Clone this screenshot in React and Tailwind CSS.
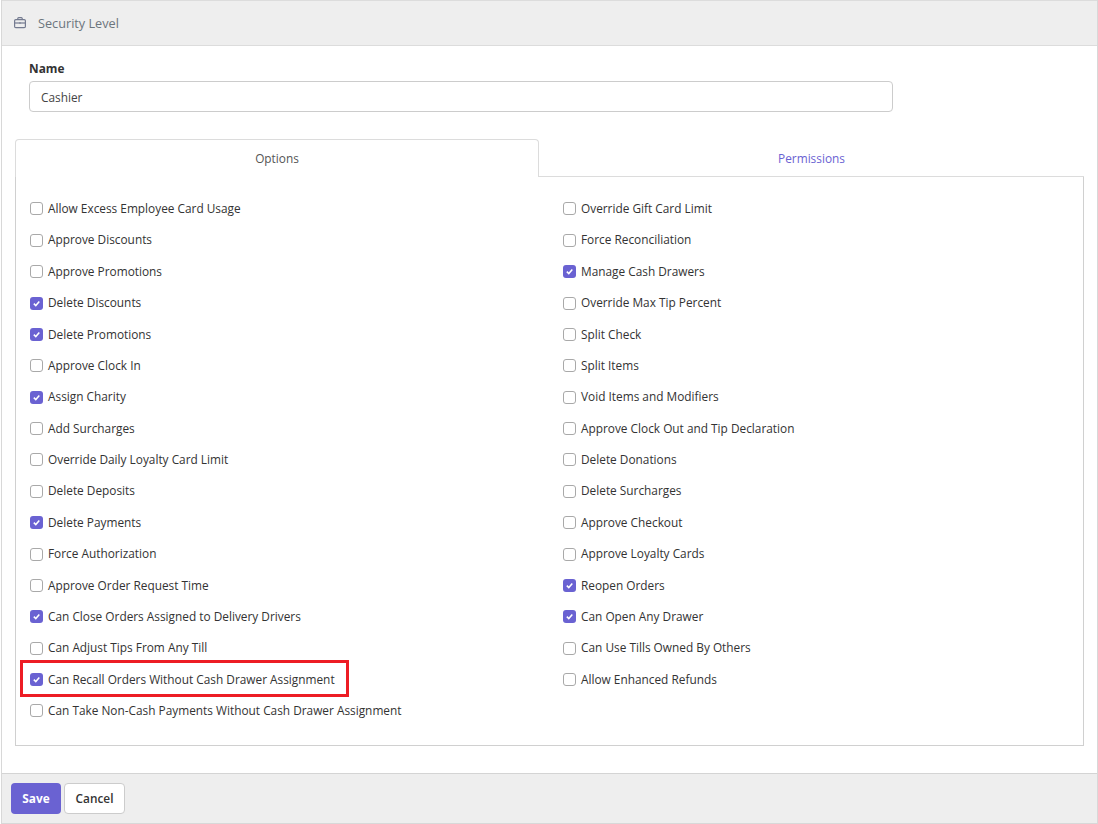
import React from 'react';

const rows = [
  ['Allow Excess Employee Card Usage', false, 'Override Gift Card Limit', false],
  ['Approve Discounts', false, 'Force Reconciliation', false],
  ['Approve Promotions', false, 'Manage Cash Drawers', true],
  ['Delete Discounts', true, 'Override Max Tip Percent', false],
  ['Delete Promotions', true, 'Split Check', false],
  ['Approve Clock In', false, 'Split Items', false],
  ['Assign Charity', true, 'Void Items and Modifiers', false],
  ['Add Surcharges', false, 'Approve Clock Out and Tip Declaration', false],
  ['Override Daily Loyalty Card Limit', false, 'Delete Donations', false],
  ['Delete Deposits', false, 'Delete Surcharges', false],
  ['Delete Payments', true, 'Approve Checkout', false],
  ['Force Authorization', false, 'Approve Loyalty Cards', false],
  ['Approve Order Request Time', false, 'Reopen Orders', true],
  ['Can Close Orders Assigned to Delivery Drivers', true, 'Can Open Any Drawer', true],
  ['Can Adjust Tips From Any Till', false, 'Can Use Tills Owned By Others', false],
  ['Can Recall Orders Without Cash Drawer Assignment', true, 'Allow Enhanced Refunds', false],
  ['Can Take Non-Cash Payments Without Cash Drawer Assignment', false],
];

const Option = ({ label, checked, highlight }) => (
  <label className="relative flex h-[31.375px] items-center pl-[14px] text-[#333]">
    {checked ? (
      <span className="flex h-[13px] w-[13px] items-center justify-center rounded-[3px] bg-[#6a62d2]">
        <svg viewBox="0 0 13 13" className="h-[13px] w-[13px]" fill="none" stroke="white" strokeWidth="1.5">
          <path d="M3.8 6.6l2 2 3.5-4" />
        </svg>
      </span>
    ) : (
      <span className="h-[13px] w-[13px] rounded-[3px] border border-[#a9a9a9] bg-white" />
    )}
    <span className="ml-[5px]">{label}</span>
    {highlight && (
      <span className="absolute left-[4px] top-[-4px] h-[37px] w-[329px] border-[3px] border-[#ed1c24]" />
    )}
  </label>
);

export default function App() {
  return (
    <div className="ml-px flex h-[824px] flex-col border-x border-b border-[#d8d8d8] bg-white font-['Open_Sans',sans-serif] text-[11.85px] text-[#333]">
      {/* Header */}
      <div className="flex h-[46px] items-center border-y border-[#dcdcdc] bg-[#eeeeee] pl-[11px] text-[#6c757d]">
        <svg viewBox="0 0 14 14" className="h-[14px] w-[14px] text-[#747b90]" fill="none" stroke="currentColor" strokeWidth="1.2">
          <rect x="1.6" y="3.6" width="10.8" height="8" rx="1.2" />
          <path d="M4.8 3.6V2.4a.8.8 0 0 1 .8-.8h2.8a.8.8 0 0 1 .8.8v1.2" />
          <path d="M1.6 7h10.8" />
          <path d="M7 6.2v1.6" />
        </svg>
        <span className="ml-[11px] pt-[1px] text-[12.7px]">Security Level</span>
      </div>

      <div className="flex-1">
        {/* Name */}
        <div className="pl-[27px] pt-[14px]">
          <div className="font-bold leading-[17px]">Name</div>
          <input
            readOnly
            value="Cashier"
            className="mt-[4px] h-[31px] w-[864px] rounded-[4px] border border-[#cccccc] px-[11px] text-[#444]"
          />
        </div>

        {/* Tabs */}
        <div className="ml-[13px] mr-[13px] mt-[27px]">
          <div className="flex h-[38px]">
            <div className="flex w-[524px] items-center justify-center rounded-t-[4px] border-x border-t border-[#dcdcdc] text-[#555]">
              Options
            </div>
            <div className="flex flex-1 items-center justify-center border-b border-[#dcdcdc] pt-[2px] text-[#6a62d2]">
              Permissions
            </div>
          </div>
          <div className="grid h-[569px] grid-cols-[533px_1fr] content-start border-x border-b border-[#d0d0d0] pt-[16.3px]">
            {rows.map((row) => (
              <React.Fragment key={row[0]}>
                <Option label={row[0]} checked={row[1]} highlight={row[0].startsWith('Can Recall')} />
                {row[2] ? <Option label={row[2]} checked={row[3]} /> : <div />}
              </React.Fragment>
            ))}
          </div>
        </div>
      </div>

      {/* Footer */}
      <div className="flex h-[50px] items-center gap-[3px] border-t border-[#d4d4d4] bg-[#eeeeee] pl-[9px]">
        <button className="h-[31px] w-[50px] rounded-[4px] bg-[#6a62d2] pt-[1px] font-bold text-white">Save</button>
        <button className="h-[31px] w-[61px] rounded-[4px] border border-[#cccccc] bg-white pt-[1px] font-semibold text-[#333]">Cancel</button>
      </div>
    </div>
  );
}
